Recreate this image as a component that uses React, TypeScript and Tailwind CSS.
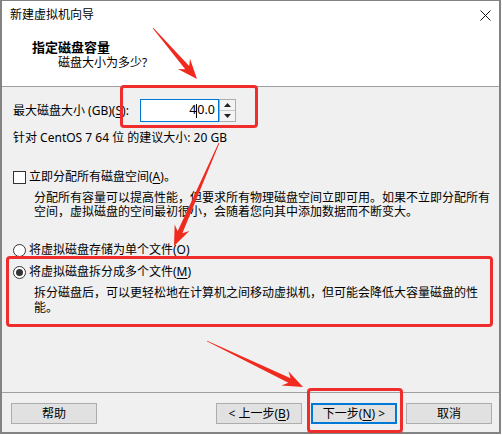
import React from "react"

// 红色标注箭头：从尾部到箭头尖端，尾细头粗
const Arrow: React.FC<{ x1: number; y1: number; x2: number; y2: number }> = ({ x1, y1, x2, y2 }) => {
    const dx = x2 - x1
    const dy = y2 - y1
    const len = Math.hypot(dx, dy)
    const ux = dx / len
    const uy = dy / len
    const nx = -uy
    const ny = ux
    const hl = 20
    const hw = 8
    const w0 = 0.4
    const w1 = 2.6
    const bx = x2 - ux * hl
    const by = y2 - uy * hl
    const nbx = x2 - ux * (hl - 5)
    const nby = y2 - uy * (hl - 5)
    const pts = [
        [x1 + nx * w0, y1 + ny * w0],
        [nbx + nx * w1, nby + ny * w1],
        [bx + nx * hw, by + ny * hw],
        [x2, y2],
        [bx - nx * hw, by - ny * hw],
        [nbx - nx * w1, nby - ny * w1],
        [x1 - nx * w0, y1 - ny * w0],
    ]
    return <polygon points={pts.map(p => p.join(",")).join(" ")} fill="#f02a1e" />
}

const Btn: React.FC<{ children: React.ReactNode; primary?: boolean }> = ({ children, primary }) => (
    <div
        className={
            "w-[86px] h-[21px] flex items-center justify-center bg-[#e1e1e1] text-[12px] leading-none " +
            (primary ? "border-2 border-[#0078d7]" : "border border-[#adadad]")
        }
    >
        {children}
    </div>
)

const U: React.FC<{ children: React.ReactNode }> = ({ children }) => (
    <span className="underline underline-offset-2 decoration-1">{children}</span>
)

export default function App() {
    return (
        <div className="relative w-[502px] h-[435px] bg-white font-['Noto_Sans','Noto_Sans_CJK_SC',sans-serif] text-black">
            <div className="w-[501px] h-[434px] flex flex-col border-x-2 border-b-2 border-t border-[#838383] bg-[#f0f0f0]">
                {/* 标题栏 + 页头 */}
                <div className="h-[86px] bg-white border-b border-[#a0a0a0] flex flex-col">
                    <div className="h-[28px] flex items-center justify-between pl-[8px] pr-[8px]">
                        <span className="text-[12px] leading-none">新建虚拟机向导</span>
                        <svg width="11" height="11" viewBox="0 0 11 11">
                            <path d="M0.5 0.5 L10.5 10.5 M10.5 0.5 L0.5 10.5" stroke="#111" strokeWidth="1" />
                        </svg>
                    </div>
                    <p className="mt-[10px] ml-[30px] text-[13px] leading-[16px] font-bold">指定磁盘容量</p>
                    <p className="ml-[56px] text-[12px] leading-[16px]">磁盘大小为多少?</p>
                </div>

                {/* 主体 */}
                <div className="h-[305px] px-[11px] text-[12px] flex flex-col">
                    <div className="mt-[12px] h-[23px] flex items-center">
                        <span className="w-[127px] leading-none">最大磁盘大小 (GB)(<U>S</U>):</span>
                        <div className="w-[79px] h-[23px] bg-white border border-[#0078d7] flex items-center justify-end pr-[3px] text-[12.5px] leading-none">
                            4<span className="inline-block w-px h-[14px] bg-black" />0.0
                        </div>
                        <div className="w-[17px] h-[23px] border border-[#adadad] bg-[#f4f4f4] flex flex-col">
                            <div className="flex-1 flex items-center justify-center border-b border-[#c8c8c8]">
                                <svg width="7" height="4" viewBox="0 0 7 4"><path d="M0 4 L3.5 0 L7 4 Z" fill="#222" /></svg>
                            </div>
                            <div className="flex-1 flex items-center justify-center">
                                <svg width="7" height="4" viewBox="0 0 7 4"><path d="M0 0 L3.5 4 L7 0 Z" fill="#222" /></svg>
                            </div>
                        </div>
                    </div>
                    <p className="mt-[8px] leading-[16px]">针对 CentOS 7 64 位 的建议大小: 20 GB</p>

                    <div className="mt-[23px] h-[16px] flex items-center">
                        <span className="w-[13px] h-[13px] bg-white border border-[#333]" />
                        <span className="ml-[3px] leading-none">立即分配所有磁盘空间(<U>A</U>)。</span>
                    </div>
                    <p className="mt-[6px] ml-[21px] leading-[14px] whitespace-nowrap">
                        分配所有容量可以提高性能，但要求所有物理磁盘空间立即可用。如果不立即分配所有
                        <br />
                        空间，虚拟磁盘的空间最初很小，会随着您向其中添加数据而不断变大。
                    </p>

                    <div className="mt-[23px] h-[16px] flex items-center">
                        <span className="w-[13px] h-[13px] rounded-full bg-white border border-[#333]" />
                        <span className="ml-[3px] leading-none">将虚拟磁盘存储为单个文件(<U>O</U>)</span>
                    </div>
                    <div className="mt-[6px] h-[16px] flex items-center">
                        <span className="w-[13px] h-[13px] rounded-full bg-white border border-[#333] flex items-center justify-center">
                            <span className="w-[7px] h-[7px] rounded-full bg-[#333]" />
                        </span>
                        <span className="ml-[3px] leading-none">将虚拟磁盘拆分成多个文件(<U>M</U>)</span>
                    </div>
                    <p className="mt-[5px] ml-[21px] leading-[15px] whitespace-nowrap">
                        拆分磁盘后，可以更轻松地在计算机之间移动虚拟机，但可能会降低大容量磁盘的性
                        <br />
                        能。
                    </p>
                </div>

                {/* 底部按钮 */}
                <div className="flex-1 border-t border-[#a0a0a0] pt-[10px] pl-[9px] pr-[7px] flex">
                    <Btn>帮助</Btn>
                    <div className="flex-1" />
                    <div className="flex gap-[9px]">
                        <Btn>&lt; 上一步(<U>B</U>)</Btn>
                        <Btn primary>下一步(<U>N</U>) &gt;</Btn>
                        <Btn>取消</Btn>
                    </div>
                </div>
            </div>

            {/* 红色标注 */}
            <div className="absolute left-[120px] top-[85px] w-[138px] h-[43px] border-[3px] border-[#ef2d2d] rounded-[4px] pointer-events-none" />
            <div className="absolute left-[6px] top-[256px] w-[487px] h-[71px] border-[3px] border-[#ef2d2d] rounded-[4px] pointer-events-none" />
            <div className="absolute left-[307px] top-[388px] w-[96px] h-[45px] border-[3px] border-[#ef2d2d] rounded-[4px] pointer-events-none" />
            <svg className="absolute left-0 top-0 pointer-events-none" width="502" height="435">
                <Arrow x1={153} y1={28} x2={197} y2={79} />
                <Arrow x1={219} y1={143} x2={174} y2={246} />
                <Arrow x1={207} y1={341} x2={303} y2={387} />
            </svg>
        </div>
    )
}
